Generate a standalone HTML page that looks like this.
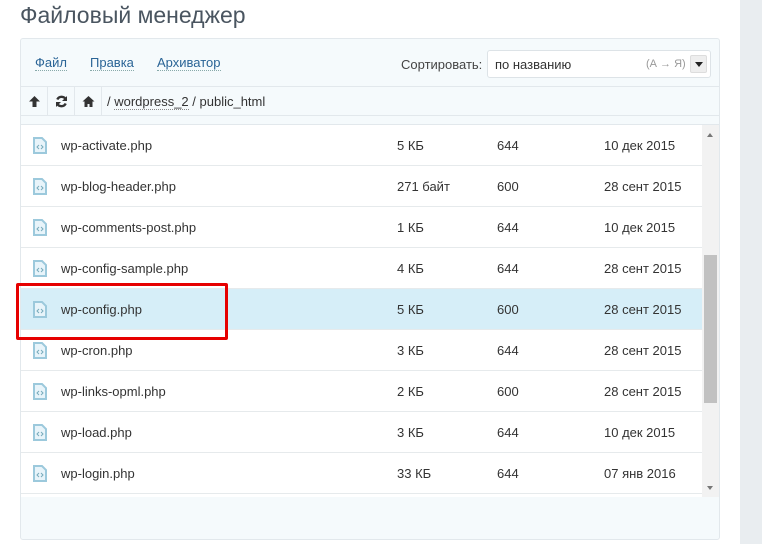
<!DOCTYPE html>
<html><head><meta charset="utf-8"><style>
*{margin:0;padding:0;box-sizing:border-box}
body{width:762px;height:544px;overflow:hidden;background:#fff;font-family:"Liberation Sans","DejaVu Sans",sans-serif;color:#333;position:relative}
.side{position:absolute;left:740px;top:0;width:22px;height:544px;background:#e9edf0}
h1{position:absolute;left:20px;top:2px;font-weight:normal;font-size:23px;color:#4a5560}
.panel{position:absolute;left:20px;top:38px;width:700px;height:502px;border:1px solid #e2e8ec;border-radius:3px;background:#f5fafc}
.tb{position:absolute;left:0;top:0;width:698px;height:48px;border-bottom:1px solid #e2e8ec}
.tb a{position:absolute;top:16px;font-size:13px;color:#2a6496;border-bottom:1px dotted #8aa;line-height:15px}
.sortl{position:absolute;left:380px;top:18px;font-size:13px;color:#444}
.sel{position:absolute;left:466px;top:11px;width:224px;height:28px;background:#fff;border:1px solid #dde3e7;border-radius:3px}
.sel .v{position:absolute;left:7px;top:6px;font-size:13px}
.sel .o{position:absolute;left:158px;top:7px;font-size:11px;color:#999}
.sel .b{position:absolute;right:3px;top:4px;width:17px;height:18px;background:#eee;border:1px solid #ddd;border-radius:2px}
.sel .b:after{content:"";position:absolute;left:4px;top:6px;border:4px solid transparent;border-top:5px solid #222}
.pb{position:absolute;left:0;top:48px;width:698px;height:29px;border-bottom:1px solid #e2e8ec}
.ic{position:absolute;top:0;width:27px;height:29px;border-right:1px solid #e2e8ec}
.ic svg{position:absolute;left:7px;top:8px}
.path{position:absolute;left:86px;top:7px;font-size:13px}
.path u{text-decoration:none;border-bottom:1px dotted #888}
.list{position:absolute;left:0;top:85px;width:698px;height:373px;background:#fff;border-top:1px solid #e2e8ec;overflow:hidden}
.row{position:absolute;left:0;width:681px;height:41px;border-bottom:1px solid #e6eaec;font-size:13px}
.row.h{background:#d6eef8}
.row span{position:absolute;top:13px}
.fi{position:absolute;left:12px;top:12px}
.sb{position:absolute;left:681px;top:0;width:17px;height:373px;background:#f2f2f2}
.th{position:absolute;left:2px;top:130px;width:13px;height:148px;background:#c1c1c1}
.red{position:absolute;left:16px;top:283px;width:212px;height:57px;border:3px solid #e60000;border-radius:2px}
</style></head><body>
<div class="side"></div>
<h1>Файловый менеджер</h1>
<div class="panel">
 <div class="tb">
  <a style="left:14px">Файл</a><a style="left:69px">Правка</a><a style="left:136px">Архиватор</a>
  <div class="sortl">Сортировать:</div>
  <div class="sel"><span class="v">по названию</span><span class="o">(А → Я)</span><div class="b"></div></div>
 </div>
 <div class="pb">
  <div class="ic" style="left:0"><svg width="13" height="13" viewBox="0 0 13 13"><path d="M6.5 1L1 6.5h3.5V12h4V6.5H12z" fill="#333"/></svg></div>
  <div class="ic" style="left:27px"><svg width="13" height="13" viewBox="0 0 13 13"><path d="M11 5A4.7 4.7 0 0 0 2.3 4.5M2 8a4.7 4.7 0 0 0 8.7.5" stroke="#333" stroke-width="2.4" fill="none"/><path d="M12 1v5H7zM1 12V7h5z" fill="#333"/></svg></div>
  <div class="ic" style="left:54px"><svg width="13" height="13" viewBox="0 0 13 13"><path d="M6.5 1L0.5 6.5h2V12h3V9h2v3h3V6.5h2z" fill="#333"/></svg></div>
  <div class="path">/ <u>wordpress_2</u> / public_html</div>
 </div>
 <div class="list">
  <div class="row" style="top:0"><svg class="fi" width="14" height="17" viewBox="0 0 14 17"><path d="M1 1h8l4 4v11H1z" fill="#e8f4fa" stroke="#9cc9dc" stroke-width="2"/><path d="M6 8l-2 2 2 2M8 8l2 2-2 2" stroke="#7ab" fill="none"/></svg><span style="left:40px">wp-activate.php</span><span style="left:376px">5 КБ</span><span style="left:476px">644</span><span style="left:583px">10 дек 2015</span></div>
  <div class="row" style="top:41px"><svg class="fi" width="14" height="17" viewBox="0 0 14 17"><path d="M1 1h8l4 4v11H1z" fill="#e8f4fa" stroke="#9cc9dc" stroke-width="2"/><path d="M6 8l-2 2 2 2M8 8l2 2-2 2" stroke="#7ab" fill="none"/></svg><span style="left:40px">wp-blog-header.php</span><span style="left:376px">271 байт</span><span style="left:476px">600</span><span style="left:583px">28 сент 2015</span></div>
  <div class="row" style="top:82px"><svg class="fi" width="14" height="17" viewBox="0 0 14 17"><path d="M1 1h8l4 4v11H1z" fill="#e8f4fa" stroke="#9cc9dc" stroke-width="2"/><path d="M6 8l-2 2 2 2M8 8l2 2-2 2" stroke="#7ab" fill="none"/></svg><span style="left:40px">wp-comments-post.php</span><span style="left:376px">1 КБ</span><span style="left:476px">644</span><span style="left:583px">10 дек 2015</span></div>
  <div class="row" style="top:123px"><svg class="fi" width="14" height="17" viewBox="0 0 14 17"><path d="M1 1h8l4 4v11H1z" fill="#e8f4fa" stroke="#9cc9dc" stroke-width="2"/><path d="M6 8l-2 2 2 2M8 8l2 2-2 2" stroke="#7ab" fill="none"/></svg><span style="left:40px">wp-config-sample.php</span><span style="left:376px">4 КБ</span><span style="left:476px">644</span><span style="left:583px">28 сент 2015</span></div>
  <div class="row h" style="top:164px"><svg class="fi" width="14" height="17" viewBox="0 0 14 17"><path d="M1 1h8l4 4v11H1z" fill="#e8f4fa" stroke="#9cc9dc" stroke-width="2"/><path d="M6 8l-2 2 2 2M8 8l2 2-2 2" stroke="#7ab" fill="none"/></svg><span style="left:40px">wp-config.php</span><span style="left:376px">5 КБ</span><span style="left:476px">600</span><span style="left:583px">28 сент 2015</span></div>
  <div class="row" style="top:205px"><svg class="fi" width="14" height="17" viewBox="0 0 14 17"><path d="M1 1h8l4 4v11H1z" fill="#e8f4fa" stroke="#9cc9dc" stroke-width="2"/><path d="M6 8l-2 2 2 2M8 8l2 2-2 2" stroke="#7ab" fill="none"/></svg><span style="left:40px">wp-cron.php</span><span style="left:376px">3 КБ</span><span style="left:476px">644</span><span style="left:583px">28 сент 2015</span></div>
  <div class="row" style="top:246px"><svg class="fi" width="14" height="17" viewBox="0 0 14 17"><path d="M1 1h8l4 4v11H1z" fill="#e8f4fa" stroke="#9cc9dc" stroke-width="2"/><path d="M6 8l-2 2 2 2M8 8l2 2-2 2" stroke="#7ab" fill="none"/></svg><span style="left:40px">wp-links-opml.php</span><span style="left:376px">2 КБ</span><span style="left:476px">600</span><span style="left:583px">28 сент 2015</span></div>
  <div class="row" style="top:287px"><svg class="fi" width="14" height="17" viewBox="0 0 14 17"><path d="M1 1h8l4 4v11H1z" fill="#e8f4fa" stroke="#9cc9dc" stroke-width="2"/><path d="M6 8l-2 2 2 2M8 8l2 2-2 2" stroke="#7ab" fill="none"/></svg><span style="left:40px">wp-load.php</span><span style="left:376px">3 КБ</span><span style="left:476px">644</span><span style="left:583px">10 дек 2015</span></div>
  <div class="row" style="top:328px"><svg class="fi" width="14" height="17" viewBox="0 0 14 17"><path d="M1 1h8l4 4v11H1z" fill="#e8f4fa" stroke="#9cc9dc" stroke-width="2"/><path d="M6 8l-2 2 2 2M8 8l2 2-2 2" stroke="#7ab" fill="none"/></svg><span style="left:40px">wp-login.php</span><span style="left:376px">33 КБ</span><span style="left:476px">644</span><span style="left:583px">07 янв 2016</span></div>
  <div class="sb"><div style="position:absolute;left:5px;top:5px;border:3px solid transparent;border-bottom:4px solid #777"></div><div class="th"></div><div style="position:absolute;left:5px;top:361px;border:3px solid transparent;border-top:4px solid #777"></div></div>
 </div>
</div>
<div class="red"></div>
</body></html>
